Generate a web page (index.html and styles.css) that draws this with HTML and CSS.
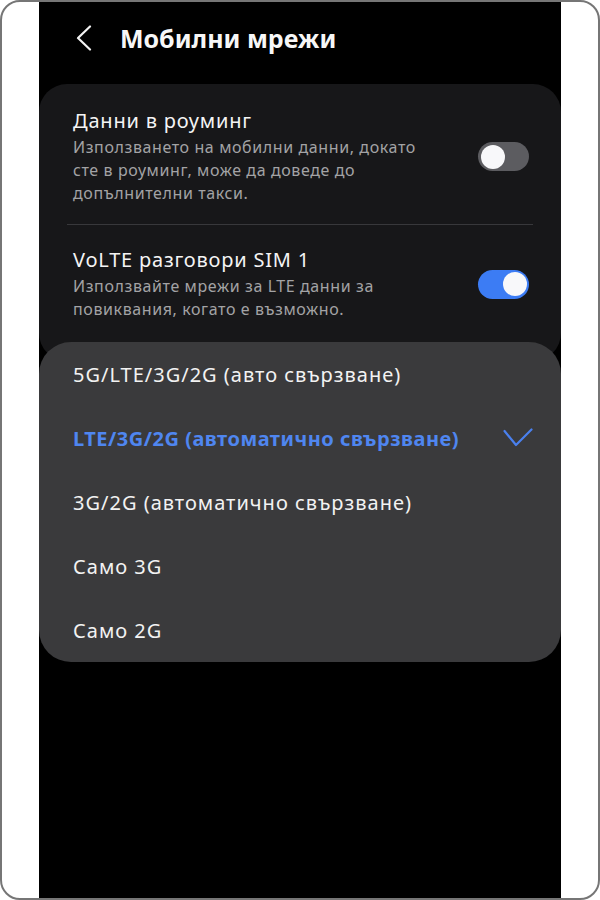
FILE: index.html
```html
<!DOCTYPE html>
<html lang="bg">

<head>
    <meta charset="UTF-8">
    <meta name="viewport" content="width=device-width, initial-scale=1.0">
    <title>Мобилни мрежи</title>
    <link rel="stylesheet" href="styles.css">
</head>

<body>
    <div class="frame">
        <div class="screen">
            <div class="appbar">
                <svg class="back-icon" width="18" height="26" viewBox="0 0 18 26">
                    <path d="M15 1.5 L3 13 L15 24.5" fill="none" stroke="#f2f2f2" stroke-width="2.2" stroke-linecap="round" stroke-linejoin="round" />
                </svg>
                <h1 class="title">Мобилни мрежи</h1>
            </div>

            <div class="card">
                <div class="pref">
                    <div class="pref-text">
                        <div class="pref-title">Данни в роуминг</div>
                        <div class="pref-summary">Използването на мобилни данни, докато сте в роуминг, може да доведе до допълнителни такси.</div>
                    </div>
                    <div class="switch"></div>
                </div>

                <div class="divider"></div>

                <div class="pref">
                    <div class="pref-text">
                        <div class="pref-title">VoLTE разговори SIM 1</div>
                        <div class="pref-summary">Използвайте мрежи за LTE данни за повиквания, когато е възможно.</div>
                    </div>
                    <div class="switch switch-on"></div>
                </div>
            </div>

            <div class="popup">
                <div class="option">5G/LTE/3G/2G (авто свързване)</div>
                <div class="option option-selected">
                    <span>LTE/3G/2G (автоматично свързване)</span>
                    <svg class="check" width="30" height="20" viewBox="0 0 30 20">
                        <path d="M1.5 3 L13 17 L28.5 1.5" fill="none" stroke="#4a80ee" stroke-width="2.2" stroke-linecap="round" stroke-linejoin="round" />
                    </svg>
                </div>
                <div class="option">3G/2G (автоматично свързване)</div>
                <div class="option">Само 3G</div>
                <div class="option">Само 2G</div>
            </div>
        </div>
    </div>
</body>

</html>
```

FILE: styles.css
```css
* {
    box-sizing: border-box;
}

body {
    margin: 0;
    background-color: #ffffff;
    font-family: "Noto Sans", "Roboto", sans-serif;
}

.frame {
    width: 600px;
    height: 900px;
    border: 2px solid #767676;
    border-radius: 20px;
    overflow: hidden;
    display: flex;
    justify-content: center;
    background-color: #ffffff;
}

.screen {
    position: relative;
    width: 522px;
    height: 100%;
    background-color: #000000;
}

.appbar {
    height: 82px;
    display: flex;
    align-items: center;
    padding-left: 36px;
    padding-bottom: 11px;
}

.back-icon {
    display: block;
}

.title {
    margin: 0 0 0 27px;
    color: #f7f7f7;
    font-size: 25px;
    font-weight: 700;
    letter-spacing: 0;
}

.card {
    background-color: #171719;
    border-radius: 28px;
    padding-top: 24px;
    padding-bottom: 40px;
}

.pref {
    display: flex;
    align-items: center;
    justify-content: space-between;
    padding: 0 32px 0 34px;
}

.pref:first-child {
    padding-bottom: 19px;
}

.pref:last-child {
    padding-top: 22px;
}

.pref-text {
    max-width: 355px;
}

.pref-title {
    color: #f4f4f4;
    font-size: 20px;
    line-height: 26px;
    letter-spacing: 0.8px;
}

.pref-summary {
    margin-top: 2px;
    color: #a3a3a5;
    font-size: 16px;
    line-height: 23px;
    letter-spacing: 0.6px;
}

.divider {
    height: 1px;
    margin: 0 28px;
    background-color: #38383b;
}

.switch {
    position: relative;
    flex-shrink: 0;
    width: 51px;
    height: 29px;
    border-radius: 15px;
    background-color: #5c5c60;
}

.switch::after {
    content: "";
    position: absolute;
    top: 2.5px;
    left: 2.5px;
    width: 24px;
    height: 24px;
    border-radius: 50%;
    background-color: #f8f8fa;
}

.switch-on {
    background-color: #3c7cf4;
}

.switch-on::after {
    left: auto;
    right: 2.5px;
}

.popup {
    position: absolute;
    top: 340px;
    left: 0;
    right: 0;
    height: 320px;
    border-radius: 32px;
    background-color: #3a3a3c;
}

.option {
    height: 64px;
    display: flex;
    align-items: center;
    justify-content: space-between;
    padding: 0 28px 0 34px;
    color: #f2f2f2;
    font-size: 20px;
    letter-spacing: 1px;
}

.option-selected {
    color: #4f86f0;
    font-weight: 700;
    letter-spacing: 0.5px;
}

.check {
    display: block;
}
```
